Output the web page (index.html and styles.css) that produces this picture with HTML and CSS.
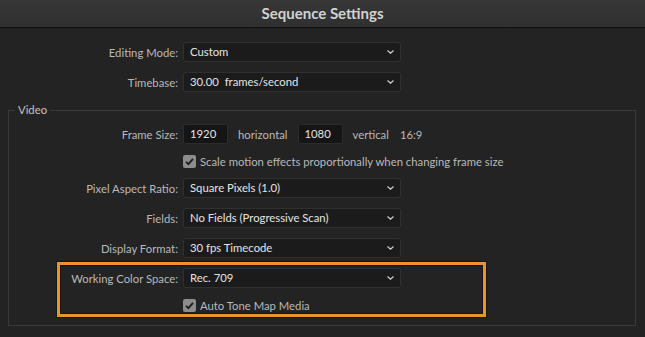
FILE: index.html
```html
<!DOCTYPE html>
<html lang="en">
<head>
    <meta charset="UTF-8">
    <title>Sequence Settings</title>
    <link rel="stylesheet" href="styles.css">
</head>
<body>
    <div class="dialog">
        <div class="titlebar">Sequence Settings</div>

        <div class="content">
            <div class="row">
                <span class="label">Editing Mode:</span>
                <div class="select">Custom
                    <svg class="chevron" width="7" height="4" viewBox="0 0 7 4"><path d="M0.5 0.5 L3.5 3.2 L6.5 0.5" /></svg>
                </div>
            </div>
            <div class="row">
                <span class="label">Timebase:</span>
                <div class="select">30.00&nbsp; frames/second
                    <svg class="chevron" width="7" height="4" viewBox="0 0 7 4"><path d="M0.5 0.5 L3.5 3.2 L6.5 0.5" /></svg>
                </div>
            </div>

            <!-- Video group -->
            <fieldset class="group">
                <legend>Video</legend>

                <div class="row">
                    <span class="label">Frame Size:</span>
                    <div class="inline">
                        <div class="field">1920</div>
                        <span class="text">horizontal</span>
                        <div class="field">1080</div>
                        <span class="text">vertical</span>
                        <span class="text ratio">16:9</span>
                    </div>
                </div>
                <div class="row check-row">
                    <span></span>
                    <div class="check">
                        <span class="box"><svg width="13" height="13" viewBox="0 0 13 13"><path d="M3 6.8 L5.4 9.2 L10 3.8" /></svg></span>
                        Scale motion effects proportionally when changing frame size
                    </div>
                </div>
                <div class="row">
                    <span class="label">Pixel Aspect Ratio:</span>
                    <div class="select">Square Pixels (1.0)
                        <svg class="chevron" width="7" height="4" viewBox="0 0 7 4"><path d="M0.5 0.5 L3.5 3.2 L6.5 0.5" /></svg>
                    </div>
                </div>
                <div class="row">
                    <span class="label">Fields:</span>
                    <div class="select">No Fields (Progressive Scan)
                        <svg class="chevron" width="7" height="4" viewBox="0 0 7 4"><path d="M0.5 0.5 L3.5 3.2 L6.5 0.5" /></svg>
                    </div>
                </div>
                <div class="row">
                    <span class="label">Display Format:</span>
                    <div class="select">30 fps Timecode
                        <svg class="chevron" width="7" height="4" viewBox="0 0 7 4"><path d="M0.5 0.5 L3.5 3.2 L6.5 0.5" /></svg>
                    </div>
                </div>

                <div class="highlight">
                    <div class="row">
                        <span class="label">Working Color Space:</span>
                        <div class="select">Rec. 709
                            <svg class="chevron" width="7" height="4" viewBox="0 0 7 4"><path d="M0.5 0.5 L3.5 3.2 L6.5 0.5" /></svg>
                        </div>
                    </div>
                    <div class="row check-row">
                        <span></span>
                        <div class="check">
                            <span class="box"><svg width="13" height="13" viewBox="0 0 13 13"><path d="M3 6.8 L5.4 9.2 L10 3.8" /></svg></span>
                            Auto Tone Map Media
                        </div>
                    </div>
                </div>
            </fieldset>
        </div>
    </div>
</body>
</html>
```

FILE: styles.css
```css
/* General */
* {
    margin: 0;
    padding: 0;
    box-sizing: border-box;
}

body {
    font-family: Lato, "Open Sans", sans-serif;
    font-size: 11.3px;
    background: #232323;
    color: #b9b9b9;
    width: 645px;
    height: 337px;
    overflow: hidden;
}

.dialog {
    display: flex;
    flex-direction: column;
    height: 100%;
}

/* Title bar */
.titlebar {
    height: 28px;
    background: linear-gradient(#373737, #303030);
    border-bottom: 1px solid #0e0e0e;
    color: #d2d2d2;
    font-size: 15px;
    font-weight: bold;
    text-align: center;
    line-height: 26px;
}

.content {
    --label-w: 178px;
    display: flex;
    flex-direction: column;
    gap: 10px;
    padding-top: 14px;
}

/* Rows */
.row {
    display: grid;
    grid-template-columns: var(--label-w) 218px;
    column-gap: 5px;
    align-items: center;
    height: 20px;
}

.label {
    text-align: right;
    white-space: nowrap;
}

.select {
    height: 20px;
    background: #1b1b1b;
    border: 1px solid #303030;
    border-radius: 3px;
    color: #e4e4e4;
    padding-left: 6px;
    line-height: 18px;
    display: flex;
    justify-content: space-between;
    align-items: center;
    padding-right: 6px;
    white-space: nowrap;
}

.chevron path {
    fill: none;
    stroke: #cfcfcf;
    stroke-width: 1.2;
}

/* Frame size */
.inline {
    display: flex;
    align-items: center;
    white-space: nowrap;
}

.field {
    flex: none;
    width: 45px;
    height: 20px;
    background: #151515;
    border: 1px solid #2c2c2c;
    border-radius: 2px;
    color: #e4e4e4;
    padding-left: 6px;
    line-height: 18px;
}

.text {
    flex: none;
    margin: 0 10px;
}

.ratio {
    margin-left: 1px;
}

/* Checkboxes */
.check-row {
    height: 14px;
}

.check {
    display: flex;
    align-items: center;
    gap: 4px;
    white-space: nowrap;
}

.box {
    width: 13px;
    height: 13px;
    background: #8c8c8c;
    border-radius: 2px;
    display: flex;
}

.box path {
    fill: none;
    stroke: #1c1c1c;
    stroke-width: 1.8;
}

/* Video group */
.group {
    --label-w: 169px;
    margin: 0 9px 0 8px;
    border: 1px solid #3a3a3a;
    padding: 6px 0 8px;
    display: flex;
    flex-direction: column;
    gap: 10px;
}

.group legend {
    margin-left: 6px;
    padding: 0 3px;
    line-height: 16px;
    color: #c4c4c4;
}

.highlight {
    --label-w: 118px;
    width: 429px;
    margin: -6px 0 0 48px;
    border: 3px solid #ee9130;
    box-shadow: 0 0 0 1px #161616, inset 0 0 0 1px #161616;
    padding: 3px 0 2px;
    display: flex;
    flex-direction: column;
    gap: 10px;
}
```
